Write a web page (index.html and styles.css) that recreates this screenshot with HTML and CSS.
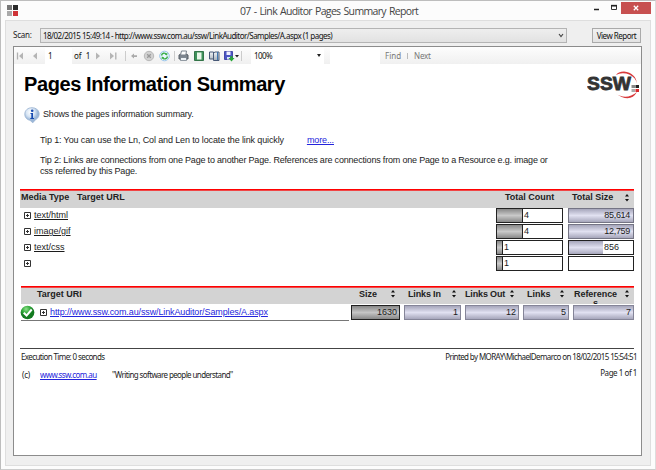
FILE: index.html
```
<!DOCTYPE html>
<html lang="en">
<head>
<meta charset="utf-8">
<title>07 - Link Auditor Pages Summary Report</title>
<link rel="stylesheet" href="styles.css">
</head>
<body>
<svg class="defs" width="0" height="0">
  <symbol id="sort" viewBox="0 0 6 10"><path d="M1 3.500 3 1l2 2.500zM1 6h4L3 8.500z" fill="#111"/></symbol>
  <symbol id="plus" viewBox="0 0 7 7"><path d="M.5.5h6v6h-6zM2 3.500h3M3.500 2v3" fill="none" stroke="#333"/></symbol>
</svg>
<div class="window">
  <header class="titlebar">
    <svg class="appicon" viewBox="0 0 11 11"><path fill="#777" d="M0 0h5v5H0z"/><path fill="#292929" d="M6 0h5v5H6z"/><path fill="#aaa" d="M0 6h5v5H0z"/><path fill="#cf3438" d="M6 6h5v5H6z"/></svg>
    <h1 class="caption">07 - Link Auditor Pages Summary Report</h1>
    <div class="controls">
      <svg class="minmax" viewBox="0 0 31 14"><path d="M4 8.500h5" stroke="#222" stroke-width="1.500"/><path d="M21.500 5v3.500h5V5z" fill="none" stroke="#333"/><path d="M21 4.500h6" stroke="#222" stroke-width="1.300"/></svg>
      <div class="close"><svg viewBox="0 0 6 6"><path d="m.8.8 4.400 4.400M5.200.8.8 5.200" stroke="#fff" stroke-width="1.300"/></svg></div>
    </div>
  </header>
  <main class="client">
    <div class="params">
      <span class="scan">Scan:</span>
      <div class="combo"><span class="combotext">18/02/2015 15:49:14 - http://www.ssw.com.au/ssw/LinkAuditor/Samples/A.aspx (1 pages)</span>
        <svg viewBox="0 0 6 5"><path d="m1 1 2 2.500L5 1" fill="none" stroke="#444" stroke-width="1.200"/></svg></div>
      <button class="view"><span>View Report</span></button>
    </div>
    <div class="viewer">
      <div class="toolbar">
        <svg class="nav" viewBox="0 0 24 16"><path d="M3.500 4.500v7" stroke="#b0b0b0" stroke-width="1.300"/><path d="M9 4.500v7L5 8zM23 4.500v7L19 8z" fill="#b5b5b5"/></svg>
        <span class="pageno">1</span>
        <span class="ofpages">of &nbsp;1</span>
        <svg class="tools" viewBox="0 0 152 16">
          <defs><linearGradient id="gd" x2="0" y2="1"><stop stop-color="#f2f5f8"/><stop offset="1" stop-color="#a5afb8"/></linearGradient></defs>
          <path d="M3 4.500v7L7 8zM17 4.500v7L21 8z" fill="#b5b5b5"/><path d="M22.800 4.500v7" stroke="#b0b0b0" stroke-width="1.300"/>
          <path d="M32.500 3v10M81.500 3v10M148.500 3v10" stroke="#ccc"/>
          <path d="M38 8l3-2.500v1.700h3v1.700h-3v1.700z" fill="#aaa"/>
          <circle cx="56" cy="8" r="4.700" fill="#d2d2d2" stroke="#b8b8b8"/><path d="m54.200 6.200 3.600 3.600m0-3.600-3.600 3.600" stroke="#999" stroke-width="1.300"/>
          <circle cx="71.500" cy="8" r="4.800" fill="#e9f7ff" stroke="#9bc6eb"/><path d="M68.500 7.500c.5-2.500 3-3 4.500-1.700M74.500 8.500c-.5 2.500-3 3-4.500 1.700" fill="none" stroke="#39ad48" stroke-width="1.400"/><path d="m74.500 4.500-.3 3-2.500-1zM68.500 11.500l.3-3 2.500 1z" fill="#39ad48"/>
          <path d="M86 7l2-1h5l2 1v4h-9z" fill="#7d858e" stroke="#555c64"/><path d="m87.500 7 1-4h5l-.7 4z" fill="#fff" stroke="#7b848e"/><path d="M87.500 9.500h6v3h-6z" fill="#eef3f7" stroke="#687480" stroke-width=".7"/>
          <path d="M101.500 3.500h9v9h-9z" fill="#3e915a" stroke="#337448"/><path d="M104 4.500h4.500v7H104z" fill="#e9f6e9"/>
          <path d="M116.500 4v7h4V4zM120.500 5v7.500h5.500V4h-4z" fill="url(#gd)" stroke="#475876"/><path d="M124.500 4v8" stroke="#4179b3"/>
          <path d="M131.500 3.500h8v8h-8z" fill="#4b56c4" stroke="#4549a8"/><path d="M133.500 3.500h4V7h-4z" fill="#f0f1ff"/><path d="M134 9h3v2.500h-3z" fill="#dce3fa"/><path d="M137.500 8h2v2h2L138.500 13.500 135.500 10h2z" fill="#27a737"/>
          <path d="M142 7h4l-2 2.500z" fill="#222"/>
        </svg>
        <span class="zoom">100% <i class="caret"></i></span>
        <span class="findbox"></span>
        <span class="find">Find</span><i class="sep"></i><span class="next">Next</span>
      </div>
      <article class="report">
        <div class="head">
          <h2>Pages Information Summary</h2>
          <svg class="logo" viewBox="0 0 54 30"><path d="M29 5A14 12.500 0 0 1 50 14Q49 3 37 1.500 31 1.500 29 5zM28 23q11 8 22-1-7 12-22 1z" fill="#d8393b"/><text x="0" y="20" class="logotext" textLength="44" lengthAdjust="spacingAndGlyphs">SSW</text><path d="M44.500 15h3.500v3h-3.500z" fill="#888"/><path d="M48.500 15h3.500v3h-3.500z" fill="#222"/><path d="M44.500 19h3.500v3h-3.500z" fill="#aaa"/><path d="M48.500 19h3.500v3h-3.500z" fill="#d9292d"/></svg>
        </div>
        <div class="info">
          <svg viewBox="0 0 16 17"><defs><radialGradient id="bub" cx=".4" cy=".3"><stop stop-color="#fff"/><stop offset=".6" stop-color="#d7e5f4"/><stop offset="1" stop-color="#9bb7d8"/></radialGradient></defs><path d="M8 .7c8 0 9.500 9 3.500 12L8.800 15.800 6 13.300C-1.500 12-1 .7 8 .7z" fill="url(#bub)" stroke="#98b1d0" stroke-width=".8"/><path d="M6.500 6H9v5h1v1H6.300v-1h1V7h-.8z" fill="#174aaf"/><circle cx="8.200" cy="3.800" r="1.300" fill="#174aaf"/></svg>
          <span>Shows the pages information summary.</span>
        </div>
        <p class="tip tip1"><span>Tip 1: You can use the Ln, Col and Len to locate the link quickly</span><a>more...</a></p>
        <p class="tip tip2"><span class="l1">Tip 2: Links are connections from one Page to another Page. References are connections from one Page to a Resource e.g. image or</span><br><span class="l2">css referred by this Page.</span></p>

        <section class="media">
          <div class="thead"><b class="mt">Media Type</b><b class="tu">Target URL</b><b class="tc">Total Count</b><b class="ts">Total Size</b><svg class="sort"><use href="#sort"/></svg></div>
          <div class="row"><svg class="plus"><use href="#plus"/></svg><u>text/html</u><div class="count"><i style="width:26px"></i><span>4</span></div><div class="size full"><span>85,614</span></div></div>
          <div class="row"><svg class="plus"><use href="#plus"/></svg><u>image/gif</u><div class="count"><i style="width:26px"></i><span>4</span></div><div class="size full"><span>12,759</span></div></div>
          <div class="row"><svg class="plus"><use href="#plus"/></svg><u>text/css</u><div class="count"><i style="width:6px"></i><span>1</span></div><div class="size"><i style="width:34px"></i><span>856</span></div></div>
          <div class="row"><svg class="plus"><use href="#plus"/></svg><u></u><div class="count"><i style="width:6px"></i><span>1</span></div><div class="size"></div></div>
        </section>

        <section class="pages">
          <div class="thead grid"><b class="uri">Target URI</b><b class="c-size">Size<svg class="sort"><use href="#sort"/></svg></b><b class="c-in">Links In<svg class="sort"><use href="#sort"/></svg></b><b class="c-out">Links Out<svg class="sort"><use href="#sort"/></svg></b><b class="c-links">Links<svg class="sort"><use href="#sort"/></svg></b><b class="ref">Reference<span class="wrap">s</span><svg class="sort"><use href="#sort"/></svg></b></div>
          <div class="grid vals">
            <div class="link"><svg class="ok" viewBox="0 0 16 16"><defs><radialGradient id="grn" cx=".4" cy=".25"><stop stop-color="#8ee08a"/><stop offset=".6" stop-color="#30a83a"/><stop offset="1" stop-color="#137a20"/></radialGradient></defs><circle cx="8" cy="8" r="7.300" fill="url(#grn)"/><path d="m4 8.300 3 3 5.500-6.500" fill="none" stroke="#fff" stroke-width="2.200"/></svg><svg class="plus"><use href="#plus"/></svg><a>http://www.ssw.com.au/ssw/LinkAuditor/Samples/A.aspx</a></div>
            <div class="val dark">1630</div><div class="val">1</div><div class="val">12</div><div class="val">5</div><div class="val">7</div>
          </div>
        </section>

        <footer>
          <div class="f1"><span class="exec">Execution Time: 0 seconds</span><span class="printed">Printed by MORAY\MichaelDemarco on 18/02/2015 15:54:51</span></div>
          <div class="f2"><span class="copy">(c)</span><a>www.ssw.com.au</a><span class="quote">"Writing software people understand"</span><span class="pageof">Page 1 of 1</span></div>
        </footer>
      </article>
    </div>
  </main>
</div>
</body>
</html>
```
FILE: styles.css
```
* { box-sizing: border-box; margin: 0; padding: 0; }
body { width: 656px; height: 470px; overflow: hidden; font-family: "Liberation Sans", Arial, sans-serif; color: #1c1c1c; white-space: nowrap; }
.defs { position: absolute; }
svg { display: block; flex: none; }
i { font-style: normal; display: block; }
.window { height: 470px; background: #fcfcfc; border: 1px solid #bdbdbd; border-right-color: #ddd; border-bottom-color: #ccc; padding: 0 4px 3px; display: flex; flex-direction: column; }
.titlebar { height: 19px; flex: none; display: flex; }
.appicon { width: 11px; height: 11px; margin: 4px 0 0 2px; }
.caption { font: 400 10.5px/20px "Open Sans", sans-serif; color: #444; margin-left: 222px; width: 180px; letter-spacing: -.53px; word-spacing: 1px; letter-spacing: -.66px; }
.controls { margin-left: auto; display: flex; }
.minmax { width: 31px; height: 14px; }
.close { width: 30px; height: 12px; margin-top: 1px; background: #c75050; display: flex; align-items: center; justify-content: center; }
.close svg { width: 6px; height: 6px; }
.client { flex: 1; background: #efefef; border: 1px solid #dedede; padding: 7px 8px 9px 7px; display: flex; flex-direction: column; }
.params { display: flex; height: 15px; margin-bottom: 3px; font: 8px/14px "Noto Sans", sans-serif; letter-spacing: -.52px; color: #222; }
.scan { width: 27px; letter-spacing: -.2px; }
.combo { width: 527px; height: 15px; border: 1px solid #b4b4b4; background: linear-gradient(#eee, #e2e2e2); display: flex; justify-content: space-between; align-items: center; padding: 0 2px; line-height: 13px; color: #111; }
.combo svg { width: 6px; height: 5px; }
.view { margin-left: 25px; width: 49px; height: 15px; border: 1px solid #aaa; background: linear-gradient(#f1f1f1, #e3e3e3); font: 8px/12px "Noto Sans", sans-serif; letter-spacing: -.5px; color: #111; }
.viewer { flex: 1; border: 1px solid #8c8c8c; background: #fff; }
.toolbar { height: 17px; background: linear-gradient(#fdfdfd, #f0f0f0); display: flex; align-items: center; font: 8px/16px "Noto Sans", sans-serif; color: #111; }
.nav { width: 24px; height: 16px; }
.pageno { width: 27px; height: 16px; margin-left: 7px; background: #fff; padding-left: 3px; }
.ofpages { margin-left: 2px; width: 20px; }
.tools { width: 152px; height: 16px; margin-left: -1px; }
.zoom { width: 73px; height: 16px; margin-left: 6px; background: #fff; display: flex; justify-content: space-between; align-items: center; padding: 0 3px 0 3px; letter-spacing: -.6px; }
.caret { border: 2px solid transparent; border-top: 3px solid #222; border-bottom: 0; }
.findbox { width: 50px; height: 16px; margin-left: 6px; background: #fff; }
.find { margin-left: 5px; width: 16px; color: #777; }
.sep { width: 1px; height: 6px; background: #bbb; margin: 0 6px 0 6px; }
.next { color: #777; letter-spacing: -.2px; }
.report { padding: 0 7px 0 6px; }
.head { height: 36px; display: flex; justify-content: space-between; padding: 6px 0 0 4px; }
.head h2 { font-size: 20px; line-height: 28px; letter-spacing: -.41px; color: #000; }
.logo { width: 54px; height: 30px; margin-right: -7px; }
.logotext { font: 900 18.5px "Liberation Sans", Arial, sans-serif; fill: #333; stroke: #333; stroke-width: .8; }
.info { display: flex; height: 35px; padding: 6px 0 0 4px; font-size: 9px; line-height: 16px; letter-spacing: -.19px; }
.info svg { width: 16px; height: 17px; margin: 1px 3px 0 0; }
.tip { font-size: 9px; line-height: 11px; padding-left: 20px; }
.tip1 { height: 20px; display: flex; letter-spacing: -.13px; }
.tip1 a { margin-left: 23px; }
.tip2 { height: 34px; letter-spacing: -.19px; }
a { color: #2424dc; text-decoration: underline; }
.thead { height: 19px; background: #d3d3d3; border-top: 1px solid #f00; box-shadow: inset 0 1px #f00a; font-size: 9px; line-height: 14px; color: #222; }
.sort { width: 6px; height: 10px; }
.media { height: 97px; }
.media .thead { display: flex; padding-left: 1px; }
.mt { width: 56px; } .tu { width: 428px; } .tc { width: 67px; } .ts { width: 52px; }
.media .sort { margin-top: 3px; }
.row { display: flex; height: 16px; padding-left: 4px; font-size: 9px; line-height: 15px; }
.row .plus { margin: 4px 3px 0 0; }
.plus { width: 7px; height: 7px; }
.row u { width: 462px; }
.count, .size { height: 15px; border: 1px solid #222; background: #fff; display: flex; line-height: 13px; }
.count { width: 67px; margin-right: 5px; }
.count i { border-right: 1px solid #222; background: linear-gradient(#888, #c9c9c9 50%, #888); }
.count span, .size span { padding-left: 1px; }
.size { width: 66px; }
.size i, .full, .val { background: linear-gradient(#a6a6bb, #e1e1f1 50%, #a6a6bb); }
.full { border-color: #747484; justify-content: flex-end; padding-right: 3px; letter-spacing: -.3px; }
.pages { height: 62px; margin-left: 1px; }
.grid { display: grid; grid-template-columns: 330px 53px 61px 58px 50px 62px; }
.pages .thead { height: 18px; }
.thead b { position: relative; }
.pages .uri { padding-left: 16px; }
.c-size { padding-left: 8px; }
.c-in, .c-links { padding-left: 4px; }
.c-in, .c-out { letter-spacing: -.15px; }
.pages .sort { position: absolute; right: 8px; top: 2px; }
.pages .ref { padding-left: 1px; height: 17px; overflow: hidden; line-height: 14px; letter-spacing: -.05px; }
.pages .ref .sort { right: 5px; }
.wrap { display: block; width: 43px; line-height: 8px; margin-top: -2px; text-align: center; }
.vals { font-size: 9px; line-height: 13px; padding-top: 1px; }
.link { height: 16px; border-bottom: 1px solid #777; width: 328px; display: flex; line-height: 14px; letter-spacing: -.12px; }
.ok { width: 15px; height: 15px; margin-left: -1px; }
.link .plus { margin: 4px 3px 0 5px; }
.val { height: 15px; border: 1px solid #858598; margin-right: 4px; padding-right: 2px; text-align: right; }
.val:last-child { margin-right: 1px; }
.dark { border-color: #222; background: linear-gradient(#888, #c5c5c5 50%, #888); }
footer { border-top: 1px solid #444; font: 8px/16px "Noto Sans", sans-serif; letter-spacing: -.61px; }
.f1 { display: flex; justify-content: space-between; padding: 0 0 0 1px; height: 17px; margin-right: -3px; }
.f2 { display: flex; padding: 1px 0 0 2px; margin-right: -3px; }
.copy { width: 18px; letter-spacing: -.2px; }
.f2 a { width: 72px; letter-spacing: -.54px; }
.pageof { margin: -2px 0 0 auto; letter-spacing: -.45px; }
```
